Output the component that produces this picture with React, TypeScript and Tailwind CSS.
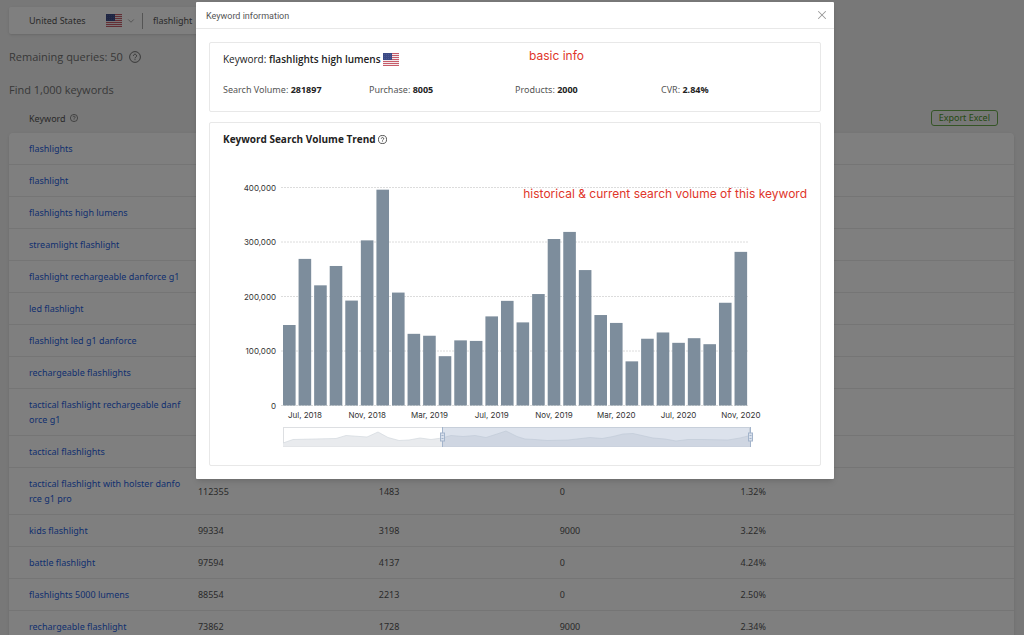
import React from "react";
import { ChevronDown, X } from "lucide-react";

type Row = { keyword: string; volume: string; purchase: string; products: string; cvr: string };

const rows: Row[] = [
  { keyword: "flashlights", volume: "", purchase: "", products: "", cvr: "" },
  { keyword: "flashlight", volume: "", purchase: "", products: "", cvr: "" },
  { keyword: "flashlights high lumens", volume: "", purchase: "", products: "", cvr: "" },
  { keyword: "streamlight flashlight", volume: "", purchase: "", products: "", cvr: "" },
  { keyword: "flashlight rechargeable danforce g1", volume: "", purchase: "", products: "", cvr: "" },
  { keyword: "led flashlight", volume: "", purchase: "", products: "", cvr: "" },
  { keyword: "flashlight led g1 danforce", volume: "", purchase: "", products: "", cvr: "" },
  { keyword: "rechargeable flashlights", volume: "", purchase: "", products: "", cvr: "" },
  { keyword: "tactical flashlight rechargeable danforce g1", volume: "", purchase: "", products: "", cvr: "" },
  { keyword: "tactical flashlights", volume: "", purchase: "", products: "", cvr: "" },
  { keyword: "tactical flashlight with holster danforce g1 pro", volume: "112355", purchase: "1483", products: "0", cvr: "1.32%" },
  { keyword: "kids flashlight", volume: "99334", purchase: "3198", products: "9000", cvr: "3.22%" },
  { keyword: "battle flashlight", volume: "97594", purchase: "4137", products: "0", cvr: "4.24%" },
  { keyword: "flashlights 5000 lumens", volume: "88554", purchase: "2213", products: "0", cvr: "2.50%" },
  { keyword: "rechargeable flashlight", volume: "73862", purchase: "1728", products: "9000", cvr: "2.34%" },
];

const volumes = [
  147700, 269000, 220500, 256000, 192500, 303000, 396000, 207200, 131500, 128000,
  90500, 119500, 118500, 163500, 192000, 152500, 204500, 305500, 318500, 248500,
  166000, 151500, 81000, 122500, 134000, 115000, 123500, 112500, 188500, 281897,
];

const axisLabels = ["Jul, 2018", "Nov, 2018", "Mar, 2019", "Jul, 2019", "Nov, 2019", "Mar, 2020", "Jul, 2020", "Nov, 2020"];

const overviewPoints =
  "60,293 70,289.5 113,288.5 123,285.5 144,287 155,282 165,287.5 176,290.5 186,290 197,288 208,289.5 219,288 228,285.5 240,286.5 252,285.5 263,287.5 274,284 283,281 294,286.5 302,289 312,289.5 324,290.5 345,290 367,287.5 379,288.5 390,286.5 400,284 410,283.5 430,288 442,289 453,291 465,289.5 480,289.5 505,290 517,288 527,285.5";

function Flag() {
  return (
    <svg width="16" height="13" viewBox="0 0 16 13" aria-label="United States flag" className="shrink-0">
      <rect width="16" height="13" fill="#f3e9ec" />
      {[0, 2, 4, 6, 8, 10, 12].map((y) => (
        <rect key={y} y={y} width="16" height="1" fill="#c75c69" />
      ))}
      <rect width="9" height="7" fill="#3c4a86" />
      {[1, 3, 5].map((y) =>
        [1, 3, 5, 7].map((x) => <rect key={`${x}-${y}`} x={x} y={y} width="0.6" height="0.6" fill="#6b78ad" />)
      )}
    </svg>
  );
}

function Help({ size }: { size: number }) {
  return (
    <svg width={size} height={size} viewBox="0 0 12 12" fill="none" stroke="currentColor" className="shrink-0">
      <circle cx="6" cy="6" r="5.4" strokeWidth="1" />
      <path d="M4.4 4.8a1.6 1.6 0 1 1 2.4 1.4c-.6.35-.8.6-.8 1.2" strokeWidth="1" />
      <circle cx="6" cy="8.8" r="0.3" strokeWidth="0.5" fill="currentColor" />
    </svg>
  );
}

function Handle({ x }: { x: number }) {
  return (
    <g stroke="#a3b4cb" fill="#d9e0ec">
      <line x1={x} x2={x} y1="277" y2="297" />
      <rect x={x - 2} y="283" width="4" height="8" />
      <path d={`M${x - 1} 285.5h2M${x - 1} 288.5h2`} />
    </g>
  );
}

function TrendChart() {
  const baseline = 255.5;
  const step = 15.57;
  return (
    <svg viewBox="0 0 584 302" className="mt-[3px] block w-full" fontFamily="Inter, sans-serif" fontSize="8" fill="#333">
      {[0, 1, 2, 3, 4].map((n) => {
        const y = baseline - n * 54.5;
        return (
          <g key={n}>
            <line x1="58" x2="526" y1={y} y2={y} stroke="#dcdcdc" strokeDasharray="2 1" />
            <text x="53" y={y + 3} textAnchor="end">
              {n === 0 ? "0" : `${n}00,000`}
            </text>
          </g>
        );
      })}
      {volumes.map((v, i) => {
        const h = (v / 100000) * 54.5;
        return <rect key={i} x={60 + i * step} y={baseline - h} width="12.6" height={h} fill="#7d8d9c" />;
      })}
      {axisLabels.map((label, i) => (
        <text key={label} x={66.3 + (i * 4 + 1) * step} y="268" textAnchor="middle">
          {label}
        </text>
      ))}
      <rect x="60.5" y="277.5" width="466" height="19" fill="#fff" stroke="#dddfe2" />
      <polygon points={`60,296.5 ${overviewPoints} 527,296.5`} fill="#e9ebee" />
      <polyline points={overviewPoints} fill="none" stroke="#d3d8de" strokeWidth="0.7" />
      <rect x="219" y="277" width="308" height="20" fill="#a7b7d0" fillOpacity="0.4" />
      <Handle x={219.5} />
      <Handle x={527.5} />
    </svg>
  );
}

function Stat({ label, value }: { label: string; value: string }) {
  return (
    <div>
      <dt className="inline">{label}: </dt>
      <dd className="inline font-bold text-[#222]">{value}</dd>
    </div>
  );
}

function Page() {
  return (
    <main className="pt-[7px] pr-[10px] pl-[9px] text-[9px] leading-[15px] text-[#555]">
      <form className="flex h-[27px] w-1/2 items-center rounded-xs bg-white pl-5 shadow-sm">
        <button type="button" className="flex items-center">
          <span className="w-[77px] text-left">United States</span>
          <Flag />
          <ChevronDown size={10} strokeWidth={2} className="ml-1 text-[#999]" />
        </button>
        <input
          aria-label="Search keyword"
          defaultValue="flashlight"
          className="ml-[6px] h-4 min-w-0 flex-1 border-l border-[#aaa] pl-[10px] outline-none"
        />
      </form>
      <p className="mt-[15px] flex items-center gap-[6px] font-['Open_Sans',sans-serif] text-[11px] leading-4 text-[#707070]">
        Remaining queries: 50
        <Help size={12} />
      </p>
      <p className="mt-[17px] font-['Open_Sans',sans-serif] text-[11px] leading-4 text-[#707070]">
        Find 1,000 keywords
      </p>
      <div className="mt-3 flex items-center justify-between pr-4 pl-5">
        <span className="flex items-center gap-1">
          Keyword <Help size={8} />
        </span>
        <button type="button" className="h-4 rounded-[3px] border border-[#6aa84c] px-[7px] leading-[14px] text-[#4d962a]">
          Export Excel
        </button>
      </div>
      <table className="mt-[7px] w-full table-fixed border-separate border-spacing-0 rounded-sm bg-white text-left shadow-sm">
        <colgroup>
          <col className="w-[18%]" />
          <col className="w-[18%]" />
          <col className="w-[18%]" />
          <col className="w-[18%]" />
          <col className="w-[28%]" />
        </colgroup>
        <tbody>
          {rows.map((r) => (
            <tr key={r.keyword} className="[&>td]:border-b [&>td]:border-[#ebebeb] [&>td]:px-2 [&>td]:py-2">
              <td className="break-all">
                <a href="#keyword" className="ml-3 block text-[#1f62e0]">
                  {r.keyword}
                </a>
              </td>
              <td>{r.volume}</td>
              <td>{r.purchase}</td>
              <td>{r.products}</td>
              <td>{r.cvr}</td>
            </tr>
          ))}
        </tbody>
      </table>
    </main>
  );
}

export default function App() {
  return (
    <div className="relative h-screen overflow-hidden bg-[#f0f0f0] font-['Noto_Sans',sans-serif]">
      <Page />
      <div className="absolute inset-0 flex items-start justify-center bg-black/50 pt-[2px] pl-[6px]">
        <section
          role="dialog"
          aria-label="Keyword information"
          className="w-full max-w-[638px] rounded-[1px] bg-white shadow-md"
        >
          <header className="flex h-[27px] items-center justify-between border-b border-[#e8e8e8] pr-[5px] pl-[10px]">
            <h1 className="pt-[2px] font-['Roboto',sans-serif] text-[9px] leading-4 text-[#555]">Keyword information</h1>
            <button type="button" aria-label="Close" className="text-[#999]">
              <X size={14} strokeWidth={1.75} />
            </button>
          </header>
          <div className="flex flex-col gap-[10px] p-[13px]">
            <div className="relative rounded-xs border border-[#e8e8e8] px-[13px] pt-2 pb-[13px]">
              <h2 className="flex items-center gap-[2px] font-['Open_Sans',sans-serif] text-[10px] leading-4 text-[#222]">
                <span>
                  Keyword: <strong className="font-semibold">flashlights high lumens</strong>
                </span>
                <Flag />
              </h2>
              <dl className="mt-[15px] grid grid-cols-4 text-[9px] leading-4 text-[#555]">
                <Stat label="Search Volume" value="281897" />
                <Stat label="Purchase" value="8005" />
                <Stat label="Products" value="2000" />
                <Stat label="CVR" value="2.84%" />
              </dl>
              <p className="absolute top-[5px] left-[319px] font-['Inter',sans-serif] text-[12px] leading-4 text-[#e0352a]">
                basic info
              </p>
            </div>
            <div className="relative rounded-xs border border-[#e8e8e8] px-[13px] pt-2 pb-[13px]">
              <h2 className="flex items-center gap-[2px] font-['Open_Sans',sans-serif] text-[10px] leading-4 font-bold text-[#222]">
                Keyword Search Volume Trend <Help size={9} />
              </h2>
              <TrendChart />
              <p className="absolute top-[63px] right-[13px] font-['Inter',sans-serif] text-[12px] leading-4 text-[#e0352a]">
                historical &amp; current search volume of this keyword
              </p>
            </div>
          </div>
        </section>
      </div>
    </div>
  );
}
